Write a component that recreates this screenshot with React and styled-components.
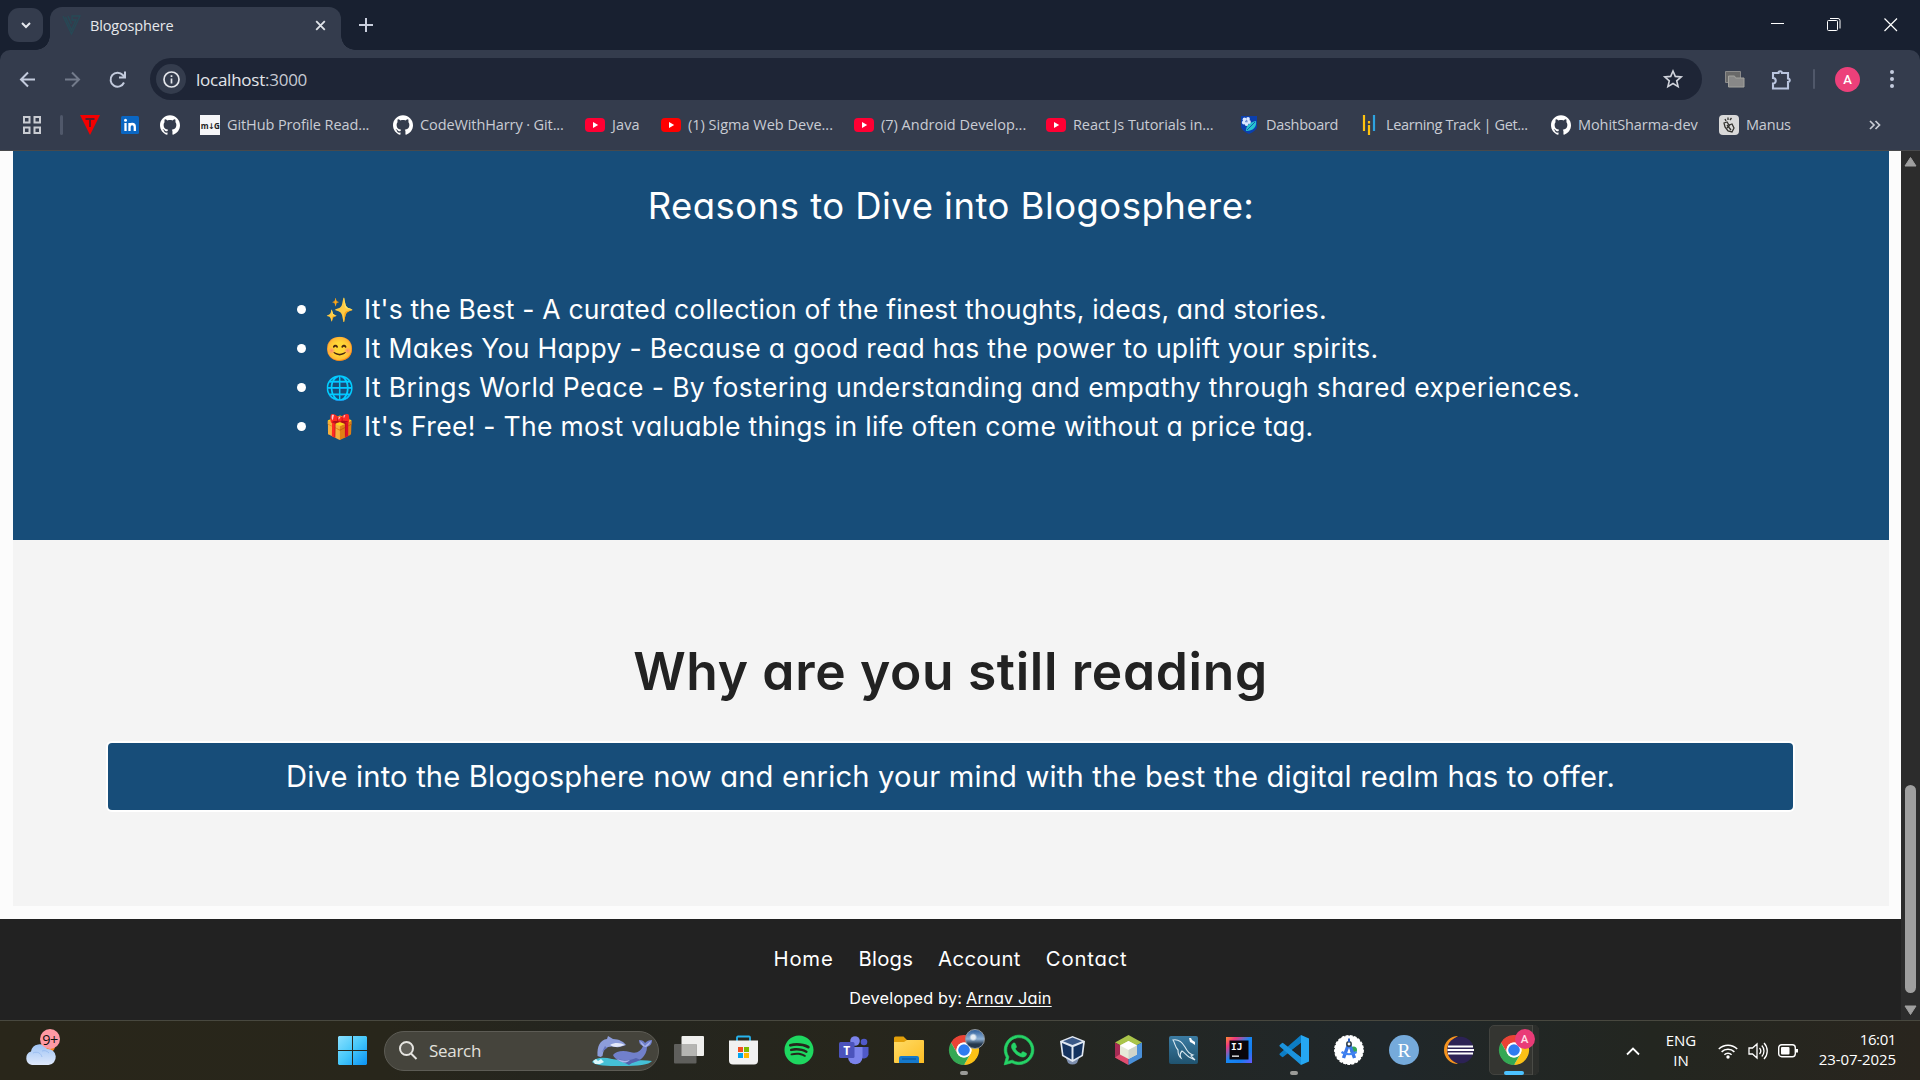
import React from 'react';
import styled, { createGlobalStyle } from 'styled-components';
import { SiGithub } from 'react-icons/si';
import { FaSpotify, FaWhatsapp } from 'react-icons/fa';

const Global = createGlobalStyle`
  * { box-sizing: border-box; }
  html, body { margin: 0; padding: 0; background: #182030; overflow: hidden; }
  svg { display: block; flex: none; overflow: visible; }
  ul { list-style: none; margin: 0; padding: 0; }
`;

const ui = `'Open Sans', 'Noto Sans', sans-serif`;
const body = `Inter, 'Open Sans', 'Noto Color Emoji', sans-serif`;

const Screen = styled.div`
  width: 1920px;
  height: 1080px;
  display: flex;
  flex-direction: column;
  overflow: hidden;
  font-family: ${ui};
`;

const Label = styled.span`
  white-space: nowrap;
  letter-spacing: ${(p) => p.$ls || 0}px;
`;

/* ---------- browser chrome ---------- */
const TabStrip = styled.header`
  height: 50px;
  flex: none;
  display: flex;
  align-items: flex-start;
  padding: 8px 0 0 8px;
  background: #182030;
`;
const TabSearch = styled.button`
  width: 35px;
  height: 34px;
  margin: 0;
  padding: 0;
  border: 0;
  border-radius: 11px;
  background: #343c4d;
  display: grid;
  place-items: center;
`;
const Tab = styled.div`
  position: relative;
  width: 291px;
  height: 43px;
  margin: -1px 0 0 7px;
  padding: 0 13px 7px 12px;
  border-radius: 12px 12px 0 0;
  background: #343c4d;
  display: flex;
  align-items: center;
  color: #e6e8ec;
  font-size: 14.5px;
  &::before, &::after {
    content: '';
    position: absolute;
    bottom: 0;
    width: 14px;
    height: 14px;
  }
  &::before { left: -14px; background: radial-gradient(circle at 0 0, transparent 13.5px, #343c4d 14px); }
  &::after { right: -14px; background: radial-gradient(circle at 100% 0, transparent 13.5px, #343c4d 14px); }
`;
const TabTitle = styled(Label)`
  flex: 1;
  margin-left: 9px;
`;
const NewTab = styled.div`
  margin: 10px 0 0 18px;
`;
const WindowControls = styled.div`
  margin: 10px 22px 0 auto;
  display: flex;
  gap: 43px;
`;

const Toolbar = styled.div`
  height: 58px;
  flex: none;
  display: flex;
  align-items: center;
  padding: 0 22px 0 18px;
  background: #343c4d;
  border-radius: 10px 10px 0 0;
`;
const NavButtons = styled.nav`
  width: 132px;
  flex: none;
  display: flex;
  gap: 26px;
`;
const Omnibox = styled.div`
  width: 1552px;
  height: 42px;
  border-radius: 21px;
  background: #1e2536;
  display: flex;
  align-items: center;
  padding: 0 19px 0 6px;
  color: #e3e5ea;
  font-size: 17px;
`;
const SiteInfo = styled.div`
  width: 30px;
  height: 30px;
  border-radius: 50%;
  background: #343c4d;
  display: grid;
  place-items: center;
`;
const Url = styled(Label)`
  flex: 1;
  margin: 0 0 0 10px;
`;
const Port = styled.span`
  color: #c6cad3;
`;
const ToolbarEnd = styled.div`
  flex: 1;
  display: grid;
  grid-template-columns: 46px 42px 22px 51px 12px;
  align-items: center;
  padding-left: 23px;
`;
const Divider = styled.i`
  width: ${(p) => p.$w}px;
  height: 20px;
  border-radius: 2px;
  background: #50586a;
`;
const Avatar = styled.div`
  width: 25px;
  height: 25px;
  border-radius: 50%;
  background: #ec407a;
  color: #fff;
  font: 500 13px Roboto, sans-serif;
  display: grid;
  place-items: center;
`;

const BookmarkBar = styled.div`
  height: 43px;
  flex: none;
  display: flex;
  align-items: flex-start;
  padding: 0 0 0 23px;
  background: #343c4d;
  border-bottom: 1px solid #48494b;
`;
const BookmarkLead = styled.div`
  height: 34px;
  width: 57px;
  display: flex;
  align-items: center;
  gap: 19px;
`;
const Bookmark = styled.a`
  width: ${(p) => p.$w}px;
  height: 34px;
  flex: none;
  display: flex;
  align-items: center;
  gap: 7px;
  color: #c9ccd4;
  font-size: 14.5px;
`;
const BookmarkLabel = styled(Label)`
  margin-top: -2px;
`;
const Icon20 = styled.span`
  width: 20px;
  height: 20px;
  flex: none;
  display: grid;
  place-items: center;
  color: #fff;
`;
const MdBadge = styled(Icon20)`
  background: #f5f6f8;
  color: #222;
  font: 700 8px 'Open Sans', 'DejaVu Sans', sans-serif;
  letter-spacing: -0.7px;
`;

/* ---------- web page ---------- */
const Viewport = styled.div`
  height: 869px;
  flex: none;
  display: flex;
  background: #fcfcfc;
`;
const Page = styled.main`
  width: 1901px;
  display: flex;
  flex-direction: column;
  font-family: ${body};
  font-feature-settings: 'cv11' 1;
`;
const Reasons = styled.section`
  height: 389px;
  margin: 0 12px 0 13px;
  background: #174d79;
  color: #fff;
  display: flex;
  flex-direction: column;
  align-items: center;
  padding-top: 32px;
`;
const ReasonsTitle = styled.h3`
  margin: 0;
  font-size: 36.5px;
  font-weight: 400;
  line-height: 46px;
  letter-spacing: 0.46px;
  white-space: nowrap;
`;
const ReasonList = styled.ul`
  width: 1308px;
  margin-top: 61px;
`;
const ReasonItem = styled.li`
  height: 39px;
  display: flex;
  align-items: center;
  font-size: 26.5px;
  white-space: nowrap;
`;
const ReasonText = styled(Label)`
  margin-top: -2px;
`;
const Bullet = styled.i`
  width: 9px;
  height: 9px;
  margin-right: 19px;
  border-radius: 50%;
  background: #fff;
`;
const Emoji = styled.span`
  width: 39px;
  font-size: 23.5px;
  line-height: 39px;
  filter: ${(p) => p.$tone};
`;
const Closing = styled.section`
  height: 366px;
  margin: 0 12px 0 13px;
  background: #f4f4f4;
  display: flex;
  flex-direction: column;
  align-items: center;
  padding: 98px 96px 0 95px;
`;
const ClosingTitle = styled.h1`
  margin: 0;
  color: #222;
  font-size: 51.5px;
  font-weight: 600;
  line-height: 66px;
  letter-spacing: 0.68px;
  white-space: nowrap;
`;
const CallToAction = styled.div`
  width: 1685px;
  height: 67px;
  margin-top: 39px;
  border-radius: 4px;
  background: #174d79;
  box-shadow: 0 0 0 2px #fff;
  color: #fff;
  font-size: 29.2px;
  display: grid;
  place-items: center;
`;
const Footer = styled.footer`
  height: 101px;
  margin-top: 13px;
  background: #222;
  color: #fff;
  display: flex;
  flex-direction: column;
  align-items: center;
`;
const FooterLinks = styled.nav`
  height: 30px;
  margin-top: 24px;
  display: flex;
  align-items: center;
  gap: 25px;
  font-size: 20.3px;
`;
const Credit = styled.p`
  height: 24px;
  margin: 13px 0 0;
  display: flex;
  align-items: center;
  gap: 4px;
  font-size: 16.3px;
`;
const CreditLink = styled(Label)`
  text-decoration: underline;
  text-underline-offset: 2px;
`;
const Scrollbar = styled.aside`
  width: 19px;
  background: #2c2c2c;
  display: flex;
  flex-direction: column;
  align-items: center;
  padding: 6px 0 5px;
`;
const Thumb = styled.i`
  width: 11px;
  height: 208px;
  margin: 618px 0 12px;
  border-radius: 6px;
  background: #9f9f9f;
`;

/* ---------- taskbar ---------- */
const Taskbar = styled.footer`
  height: 60px;
  flex: none;
  display: flex;
  align-items: center;
  border-top: 1px solid #48483f;
  background: linear-gradient(90deg, #29261a 0%, #28261b 20%, #24251f 30%, #27261c 45%, #20272a 72%, #232620 86%, #29251e 100%);
  color: #fff;
`;
const Weather = styled.div`
  position: relative;
  width: 338px;
  height: 59px;
  padding: 20px 0 0 25px;
`;
const WeatherBadge = styled.div`
  position: absolute;
  left: 40px;
  top: 8px;
  width: 20px;
  height: 20px;
  border-radius: 50%;
  background: #ff99a4;
  color: #111;
  font-size: 14.5px;
  letter-spacing: -0.5px;
  display: grid;
  place-items: center;
`;
const SearchBox = styled.div`
  width: 275px;
  height: 40px;
  margin: 0 2px 0 17px;
  padding: 0 6px 0 14px;
  border: 1px solid #5d5c55;
  border-radius: 20px;
  background: #45443c;
  display: flex;
  align-items: center;
  color: #e2e1dd;
  font-size: 17px;
`;
const SearchLabel = styled(Label)`
  flex: 1;
  margin: 0 0 0 12px;
`;
const App55 = styled.div`
  position: relative;
  width: 55px;
  height: 59px;
  padding-bottom: 1px;
  display: grid;
  place-items: center;
  &::after {
    content: '';
    position: absolute;
    left: 50%;
    bottom: 5px;
    width: ${(p) => (p.$active ? 20 : p.$running ? 8 : 0)}px;
    height: 4px;
    border-radius: 2px;
    transform: translateX(-50%);
    background: ${(p) => (p.$active ? '#4cc2ff' : '#9b9b98')};
  }
`;
const ActiveTile = styled.div`
  position: absolute;
  left: 3px;
  top: 4px;
  width: 50px;
  height: 50px;
  border: 1px solid #42433f;
  border-radius: 5px;
  background: #343531;
  &::after {
    content: '';
    position: absolute;
    right: -1px;
    top: -1px;
    width: 6px;
    height: 50px;
    border-left: 1px solid #4a4b46;
    border-radius: 0 5px 5px 0;
    background: #2c2e2b;
  }
`;
const Layer = styled.div`
  position: relative;
`;
const ProfileBadge = styled.div`
  position: absolute;
  left: 16px;
  top: -6px;
  width: 20px;
  height: 20px;
  border-radius: 50%;
  background: ${(p) => p.$bg};
  border: ${(p) => (p.$ring ? '1px solid #8f979f' : '0')};
  color: #ffe1ea;
  font: 500 11.5px Roboto, sans-serif;
  display: grid;
  place-items: center;
`;
const Tray = styled.div`
  margin-left: auto;
  padding-right: 24px;
  display: flex;
  align-items: center;
  font-size: 15px;
  line-height: 20px;
`;
const Language = styled.div`
  width: 40px;
  margin: -2px 17px 0 21px;
  display: flex;
  flex-direction: column;
  align-items: center;
`;
const Status = styled.div`
  display: flex;
  align-items: center;
  gap: 10px;
`;
const Clock = styled.div`
  width: 98px;
  margin-top: -4px;
  display: flex;
  flex-direction: column;
  align-items: flex-end;
`;

/* ---------- drawings ---------- */
const Stroke = ({ w = 19, h = w, c = '#c3c9d9', sw = 2, d, vb = `0 0 ${w} ${h}`, cap = 'butt' }) => (
  <svg width={w} height={h} viewBox={vb} fill="none" stroke={c} strokeWidth={sw} strokeLinecap={cap}>
    <path d={d} />
  </svg>
);

const YouTube = ({ color = '#ff0033' }) => (
  <svg width="20" height="14" viewBox="0 0 20 14">
    <rect width="20" height="14" rx="4" fill={color} />
    <path d="M8 4l5.200 3L8 10z" fill="#fff" />
  </svg>
);

const Chrome = () => (
  <svg width="30" height="30" viewBox="0 0 48 48">
    <circle cx="24" cy="24" r="23" fill="#fff" />
    <path d="M24 12h20.8A24 24 0 0 0 3.2 12l10.4 18A12 12 0 0 1 24 12z" fill="#ea4335" />
    <path d="M34.4 30L24 48A24 24 0 0 0 44.8 12H24a12 12 0 0 1 10.4 18z" fill="#fbc116" />
    <path d="M13.6 30L3.2 12A24 24 0 0 0 24 48l10.4-18a12 12 0 0 1-20.8 0z" fill="#34a853" />
    <circle cx="24" cy="24" r="12" fill="#fff" />
    <circle cx="24" cy="24" r="9.3" fill="#2f7cf0" />
  </svg>
);

const WindowsLogo = () => (
  <svg width="29" height="29" viewBox="0 0 29 29">
    <defs>
      <linearGradient id="win" x1="0" y1="0" x2="29" y2="29" gradientUnits="userSpaceOnUse">
        <stop stopColor="#8be1ff" /><stop offset=".5" stopColor="#45c7fa" /><stop offset="1" stopColor="#0a92f5" />
      </linearGradient>
    </defs>
    <path fill="url(#win)" d="M1 0h13v14H0V1zM15 0h13l1 1v13H15zM0 15h14v14H1l-1-1zM15 15h14v13l-1 1H15z" />
  </svg>
);

const Cloud = () => (
  <svg width="31" height="24" viewBox="0 0 31 24">
    <defs>
      <linearGradient id="cl" x1="0" y1="0" x2="0" y2="1">
        <stop stopColor="#9fc4f5" /><stop offset="1" stopColor="#dfe9fb" />
      </linearGradient>
    </defs>
    <circle cx="23" cy="5" r="7" fill="#f7821b" />
    <path d="M7 24a7 7 0 0 1-1-13.500 A8.500 8.500 0 0 1 22 8a8 8 0 0 1 1.500 16z" fill="url(#cl)" />
    <path d="M8 12c4-2 8 0 9 4M17 10c3-1 5 0 7 2" fill="none" stroke="#8fb5ec" strokeWidth="1" opacity=".7" />
  </svg>
);

const Dolphins = () => (
  <svg width="60" height="30" viewBox="0 0 60 30">
    <path d="M0 26c4-5 12-5 20-3s28 0 40 2c-3 4-14 5-30 5S4 30 0 26z" fill="#45c0d6" />
    <path d="M1 25l3-2 2 2 3-2 3 3-4 2H3z" fill="#d9f7fb" />
    <path d="M5.500 20C5 10 8 4 15 3l1-3 5 3c6 0 11 3 13 6-4 1-7 3-10 2-4-1-8-1-11 2-2 2-2 5-2.500 7l-2 1z" fill="#8d9ddb" />
    <path d="M18 9c5-3 11-2 15 0-4 1-6 2-9 2-2 0-4-1-6-2z" fill="#e3e8fa" />
    <path d="M13 10l-3 6 5-4z" fill="#6473bd" />
    <path d="M21 19c3-4 10-5 17-3 7 2 11-1 13-6-3-1-4-3-4-6 3 0 5 1 6 3 2-2 4-3 7-3 0 4-2 6-5 7 0 9-8 16-18 16-7 0-14-3-16-8z" fill="#7180cb" />
    <path d="M23 22c7 3 14 3 21 0l5 2-9 3-3 2z" fill="#5363ae" />
    <path d="M48 5c2 1 3 3 5 5 2-2 4-4 6-5-1 3-3 5-5 6-3 0-5-3-6-6z" fill="#a9b5ea" />
    <path d="M25 23c5 2 9 2 13 1-4 4-9 3-13-1z" fill="#aab8ec" />
  </svg>
);

const TaskView = () => (
  <svg width="30" height="28" viewBox="0 0 30 28">
    <rect x="7.500" y="0" width="22.500" height="20" rx="1" fill="#efefed" />
    <rect x="0" y="8" width="22.500" height="19.500" rx="1" fill="#5f5f5c" />
    <rect x="7.500" y="8" width="15" height="12" fill="#b5b5b2" />
  </svg>
);

const Store = () => (
  <svg width="29" height="29" viewBox="0 0 29 29">
    <path d="M8 6V1.500a1 1 0 0 1 1-1h11a1 1 0 0 1 1 1V6" fill="none" stroke="#27b4ee" strokeWidth="1.800" />
    <path d="M0 4.500h29v20a4 4 0 0 1-4 4H4a4 4 0 0 1-4-4z" fill="#f1f1f1" />
    <path d="M9 11h5v5H9z" fill="#f25022" /><path d="M15 11h5v5h-5z" fill="#7fba00" />
    <path d="M9 17h5v5H9z" fill="#00a4ef" /><path d="M15 17h5v5h-5z" fill="#ffb900" />
  </svg>
);

const Teams = () => (
  <svg width="30" height="28" viewBox="0 0 30 28">
    <circle cx="16" cy="5" r="4.800" fill="#7b83eb" /><circle cx="25" cy="6" r="3.300" fill="#5059c9" />
    <path d="M20 11h9.500v7.500a5 5 0 0 1-9.500 1z" fill="#5059c9" />
    <path d="M9 11h14.500v10a7 7 0 0 1-14.500 0z" fill="#7b83eb" />
    <rect x="0" y="6" width="15.500" height="16" rx="1.500" fill="#4b53bc" />
    <text x="7.700" y="18.500" textAnchor="middle" fill="#fff" fontFamily="Open Sans" fontWeight="700" fontSize="12">T</text>
  </svg>
);

const Folder = () => (
  <svg width="30" height="28" viewBox="0 0 30 28">
    <defs><linearGradient id="fo" x1="0" y1="0" x2="1" y2="1"><stop stopColor="#ffdb66" /><stop offset="1" stopColor="#fdbd23" /></linearGradient></defs>
    <path d="M0 2a1.500 1.500 0 0 1 1.500-1.500h8L13 4h16v6H0z" fill="#e3a009" />
    <path d="M0 6h10l3-2h16a1 1 0 0 1 1 1v22H1a1 1 0 0 1-1-1z" fill="url(#fo)" />
    <path d="M5 27v-5a2 2 0 0 1 2-2h16a2 2 0 0 1 2 2v5z" fill="#1579cc" />
    <path d="M8 23h14" stroke="#0b559c" strokeWidth="1.200" />
  </svg>
);

const VirtualBox = () => (
  <svg width="27" height="29" viewBox="0 0 27 29">
    <path d="M6 22h13l-2 5q-4.500 3-9 0z" fill="#7e8fae" />
    <path d="M12.500 0L25 5l-2 15-10.500 6L2 20 0 5z" fill="#e1e8f2" />
    <path d="M12.500 1.500L22 5.300 12.500 9 3 5.300z" fill="#3b5987" />
    <path d="M2 7l9.500 4v12.500L3.500 19zM23 7l-9.500 4v12.500l8-4.500z" fill="#15335f" />
  </svg>
);

const NetBeans = () => (
  <svg width="27" height="30" viewBox="0 0 27 30">
    <path d="M13.500 0L27 7.500l-13.500 7L0 7.500z" fill="#a9c44a" />
    <path d="M0 7.500l13.500 7V30L0 22.500z" fill="#a52b54" /><path d="M0 22.500l6-4 7.500 5V30z" fill="#df4d6e" />
    <path d="M27 7.500l-13.500 7V30L27 22.500z" fill="#4a90d9" />
    <path d="M13.500 6l8.500 4.500v9L13.500 24 5 19.500v-9z" fill="#e6ead9" />
    <path d="M13.500 6l8.500 4.500-8.500 4.500L5 10.500z" fill="#fff" /><path d="M13.500 15v9L22 19.500v-9z" fill="#cfd5cb" />
  </svg>
);

const MySql = () => (
  <svg width="29" height="28" viewBox="0 0 29 28">
    <defs><linearGradient id="my" x1="0" y1="0" x2="0" y2="1"><stop stopColor="#3b7ba2" /><stop offset="1" stopColor="#20536f" /></linearGradient></defs>
    <rect width="29" height="28" rx="2" fill="url(#my)" />
    <path d="M4 4c5-1 9 2 12 7 2 4 4 7 8 8l-2 1 4 4-6-3c-3-2-5-5-7-6-2 2-2 5-1 7-3-2-3-5-3-8C6 11 6 7 4 4z" fill="none" stroke="#dceaf2" strokeWidth="1.100" />
    <path d="M20 2l2 0 1 2 3 2 0 3-3-2-2-1z" fill="#fff" />
  </svg>
);

const IntelliJ = () => (
  <svg width="26" height="26" viewBox="0 0 26 26">
    <defs><linearGradient id="ij" x1="0" y1="0" x2="1" y2="1"><stop stopColor="#ff8a33" /><stop offset=".2" stopColor="#f0387d" /><stop offset=".48" stopColor="#1688f4" /><stop offset=".75" stopColor="#177cf0" /><stop offset="1" stopColor="#6b57ff" /></linearGradient></defs>
    <path d="M0 0h26v26H0z" fill="url(#ij)" />
    <path d="M3.500 3.500h19v19h-19z" fill="#09060c" />
    <text x="5" y="12.500" fill="#fff" fontFamily="DejaVu Sans Mono" fontWeight="700" fontSize="9.500">IJ</text>
    <path d="M6 18.500h7v1.300H6z" fill="#fff" />
  </svg>
);

const VsCode = () => (
  <svg width="30" height="30" viewBox="0 0 30 30">
    <path d="M22 0l8 3.500v23L22 30z" fill="#25a7f2" />
    <path d="M22 0L.8 18.500a1 1 0 0 0 0 1.500l2 1.800a1.200 1.200 0 0 0 1.600 0L22 8z" fill="#0c7dc5" />
    <path d="M22 30L.8 11.500a1 1 0 0 1 0-1.500l2-1.800a1.200 1.200 0 0 1 1.600 0L22 22z" fill="#1b93dd" />
    <path d="M22 8v14l-9-7z" fill="#20272a" />
  </svg>
);

const AndroidStudio = () => (
  <svg width="30" height="30" viewBox="0 0 30 30">
    <circle cx="15" cy="15" r="14.200" fill="#fff" stroke="#fff" strokeWidth="1.500" strokeDasharray="3 1.200" />
    <circle cx="19.500" cy="15" r="3.500" fill="#34a853" />
    <path d="M15 8L9.500 23M15 8l5.500 15" stroke="#3b78e7" strokeWidth="3.400" />
    <path d="M7.500 17c4 3 11 3 15 0" stroke="#4285f4" strokeWidth="2.200" fill="none" />
    <circle cx="15" cy="9" r="2.200" fill="#fff" stroke="#2b3a44" strokeWidth="1.500" />
    <path d="M15 3.500v3.500" stroke="#2b5fc4" strokeWidth="2" />
  </svg>
);

const RLogo = () => (
  <svg width="30" height="30" viewBox="0 0 30 30">
    <circle cx="15" cy="15" r="15" fill="#75aadb" />
    <text x="15" y="21.500" textAnchor="middle" fill="#fff" fontFamily="Liberation Serif" fontSize="19.500">R</text>
  </svg>
);

const Eclipse = () => (
  <svg width="30" height="28" viewBox="0 0 30 28">
    <path d="M14 0A14 14 0 0 0 14 28 16 16 0 0 1 14 0z" fill="#f7941e" />
    <circle cx="16.500" cy="14" r="13.300" fill="#2c2255" />
    <path d="M4 10.500h25M3.500 14h26.500M4 17.500h25" stroke="#fff" strokeWidth="2" />
  </svg>
);

const bookmarks = [
  { w: 40, icon: (
    <Icon20><svg width="20" height="20" viewBox="0 0 20 20"><path d="M0 0h20l-10 20z" fill="#f40000" /><path d="M5.500 4h9M10 4v8" stroke="#5a1f2b" strokeWidth="2" /></svg></Icon20>) },
  { w: 40, icon: (
    <Icon20><svg width="18" height="18" viewBox="0 0 18 18"><rect width="18" height="18" rx="1.500" fill="#0a66c2" /><circle cx="4.500" cy="4.300" r="1.500" fill="#fff" /><path d="M4.500 7v8M8.500 7v8M8.500 11c0-4 5.300-4 5.300 0v4" fill="none" stroke="#fff" strokeWidth="2.300" /></svg></Icon20>) },
  { w: 40, icon: <Icon20><SiGithub size={20} /></Icon20> },
  { w: 193, icon: <MdBadge>m↓G</MdBadge>, text: 'GitHub Profile Read...', ls: -0.1 },
  { w: 192, icon: <Icon20><SiGithub size={20} /></Icon20>, text: 'CodeWithHarry · Git...', ls: -0.1 },
  { w: 76, icon: <Icon20><YouTube /></Icon20>, text: 'Java', ls: 0.1 },
  { w: 193, icon: <Icon20><YouTube color="#ff0000" /></Icon20>, text: '(1) Sigma Web Deve...', ls: 0 },
  { w: 192, icon: <Icon20><YouTube /></Icon20>, text: '(7) Android Develop...', ls: 0 },
  { w: 193, icon: <Icon20><YouTube /></Icon20>, text: 'React Js Tutorials in...', ls: -0.08 },
  { w: 120, icon: (
    <Icon20><svg width="16" height="18" viewBox="0 0 16 18"><path d="M0 0h16v11q-1 4-8 7-7-3-8-7z" fill="#0b3fae" /><path d="M5 15c0-6 4-9 10-10 1 6-3 10-10 10z" fill="#27c5cf" /><path d="M6 14l8-8" stroke="#0b3fae" strokeWidth=".8" /><g fill="#dbe8ff"><circle cx="3.500" cy="3.500" r="1.900" /><circle cx="7" cy="3" r="1.900" /><circle cx="8" cy="6" r="1.900" /><circle cx="5.500" cy="8" r="1.900" /><circle cx="2.800" cy="6.500" r="1.900" /></g><circle cx="5.400" cy="5.300" r="1" fill="#7895d8" /></svg></Icon20>), text: 'Dashboard', ls: -0.3 },
  { w: 192, icon: (
    <Icon20><svg width="12" height="20" viewBox="0 0 12 20"><path d="M1 0v16" stroke="#ffc20e" strokeWidth="2.200" /><path d="M11 0v16" stroke="#2ea3e0" strokeWidth="2.200" /><path d="M6 10v10M6 6v2.500" stroke="#ffc20e" strokeWidth="2.200" /></svg></Icon20>), text: 'Learning Track | Get...', ls: -0.37 },
  { w: 168, icon: <Icon20><SiGithub size={20} /></Icon20>, text: 'MohitSharma-dev', ls: -0.07 },
  { w: 150, icon: (
    <Icon20><svg width="20" height="20" viewBox="0 0 20 20"><rect width="20" height="20" rx="4" fill="#d9d9d9" /><path d="M5 8l3-1 2 3 3-1 2 4-2 4-4-1-3-4zM8 10l4 5M11 10l-3 3M6 4l1 2M9 2.500V5M12.500 3L11 5" fill="none" stroke="#33332f" strokeWidth="1.300" /></svg></Icon20>), text: 'Manus', ls: -0.2 },
];

const reasons = [
  { emoji: '✨', tone: 'hue-rotate(-14deg)', ls: 0.185, text: "It's the Best - A curated collection of the finest thoughts, ideas, and stories." },
  { emoji: '😊', tone: 'hue-rotate(-8deg)', ls: 0.3, text: 'It Makes You Happy - Because a good read has the power to uplift your spirits.' },
  { emoji: '🌐', tone: 'brightness(1.15)', ls: 0.405, text: 'It Brings World Peace - By fostering understanding and empathy through shared experiences.' },
  { emoji: '🎁', tone: 'none', ls: 0.31, text: "It's Free! - The most valuable things in life often come without a price tag." },
];

const footerLinks = [
  { text: 'Home', ls: 0.8 },
  { text: 'Blogs', ls: 0.2 },
  { text: 'Account', ls: 0.4 },
  { text: 'Contact', ls: 0.8 },
];

const taskApps = [
  { icon: <TaskView /> },
  { icon: <Store /> },
  { icon: <FaSpotify size={30} color="#1ed760" /> },
  { icon: <Teams /> },
  { icon: <Folder /> },
  { running: true, icon: (
    <Layer><Chrome /><ProfileBadge $ring $bg="radial-gradient(circle at 40% 40%, #e6edf3 0 2px, transparent 4px), linear-gradient(#2f5f9b, #8fb2d6 50%, #25384d 78%)" /></Layer>) },
  { icon: <FaWhatsapp size={34} color="#25d366" stroke="#25d366" strokeWidth={10} /> },
  { icon: <VirtualBox /> },
  { icon: <NetBeans /> },
  { icon: <MySql /> },
  { icon: <IntelliJ /> },
  { running: true, icon: <VsCode /> },
  { icon: <AndroidStudio /> },
  { icon: <RLogo /> },
  { icon: <Eclipse /> },
];

export default function App() {
  return (
    <Screen>
      <Global />
      <TabStrip>
        <TabSearch><Stroke w={10} h={6} c="#e6e8ee" d="M1 1l4 4 4-4" /></TabSearch>
        <Tab>
          <svg width="19" height="20" viewBox="0 0 19 20" fill="none" stroke="#264a56" strokeWidth="1.300">
            <path d="M1 1l8.500 18L18 1h-8v4h4L9.500 15 3.500 2M6 1l3.500 8" />
          </svg>
          <TabTitle $ls={-0.15}>Blogosphere</TabTitle>
          <Stroke w={15} h={15} vb="-2 -2 14 14" c="#e1e4ea" sw={1.7} d="M1 1l8 8M9 1l-8 8" />
        </Tab>
        <NewTab><Stroke w={14} c="#c9cfdd" d="M7 0v14M0 7h14" /></NewTab>
        <WindowControls>
          <Stroke w={14} c="#fff" sw={1} d="M1 5.500h13" />
          <svg width="14" height="14" viewBox="0 0 14 14" fill="none" stroke="#fff">
            <rect x=".5" y="2.500" width="10" height="10" rx="1" />
            <path d="M3 .5h8a2 2 0 0 1 2 2v8" />
          </svg>
          <Stroke w={14} c="#fff" sw={1.2} d="M.5.500l12.500 12.500M13 .5L.5 13" />
        </WindowControls>
      </TabStrip>

      <Toolbar>
        <NavButtons>
          <Stroke w={19} c="#c3cbdd" d="M17 9.500H3M10 2.500L3 9.500 10 16.500" />
          <Stroke w={19} c="#737b8b" d="M2 9.500h14M9 2.500l7 7L9 16.500" />
          <Stroke w={19} c="#c3cbdd" d="M16 12.500A7 7 0 1 1 14.800 5L17 7.200M17 1.500v6h-6" />
        </NavButtons>
        <Omnibox>
          <SiteInfo>
            <svg width="17" height="17" viewBox="0 0 17 17" fill="none" stroke="#e3e5ea" strokeWidth="1.700">
              <circle cx="8.500" cy="8.500" r="7.500" /><path d="M8.500 7.500v5M8.500 4.300v1.700" />
            </svg>
          </SiteInfo>
          <Url $ls={-0.25}>localhost<Port>:3000</Port></Url>
          <Stroke w={20} c="#d1d4dc" sw={1.6} d="M10 2l2.300 5.400 5.900.5-4.500 3.900 1.400 5.800L10 14.500l-5.100 3.100 1.400-5.800L1.800 7.900l5.900-.5z" />
        </Omnibox>
        <ToolbarEnd>
          <svg width="20" height="17" viewBox="0 0 20 17">
            <path d="M.5.5h15v11H.5z" fill="#696969" stroke="#8b8b8b" />
            <path d="M3.500 5h6l1 2h8.500v9H3.500z" fill="#888" stroke="#a3a39e" />
          </svg>
          <Stroke w={21} c="#b9c5df" sw={2.1} d="M2 4h5.500a1.600 1.600 0 1 1 3.500 0H17v5.500a1.500 1.500 0 1 1 0 3.500v6.500H2v-5a2.500 2.500 0 0 0 0-5.500z" />
          <Divider $w={2} />
          <Avatar>A</Avatar>
          <svg width="12" height="20" viewBox="0 0 12 20" fill="#c3cbdd">
            <circle cx="6" cy="3" r="2" /><circle cx="6" cy="10" r="2" /><circle cx="6" cy="17" r="2" />
          </svg>
        </ToolbarEnd>
      </Toolbar>

      <BookmarkBar>
        <BookmarkLead>
          <Stroke w={18} c="#c9ccd2" d="M1 1h5.500v5.500H1zM11.500 1H17v5.500h-5.500zM1 11.500h5.500V17H1zM11.500 11.500H17V17h-5.500z" />
          <Divider $w={3} />
        </BookmarkLead>
        {bookmarks.map((b, i) => (
          <Bookmark key={i} $w={b.w}>
            {b.icon}
            {b.text && <BookmarkLabel $ls={b.ls}>{b.text}</BookmarkLabel>}
          </Bookmark>
        ))}
        <Bookmark $w={20}><Stroke w={12} h={10} c="#c9ccd4" sw={1.7} d="M1 1l4 4-4 4M6.500 1l4 4-4 4" /></Bookmark>
      </BookmarkBar>

      <Viewport>
        <Page>
          <Reasons>
            <ReasonsTitle>Reasons to Dive into Blogosphere:</ReasonsTitle>
            <ReasonList>
              {reasons.map((r) => (
                <ReasonItem key={r.emoji}>
                  <Bullet />
                  <Emoji $tone={r.tone}>{r.emoji}</Emoji>
                  <ReasonText $ls={r.ls}>{r.text}</ReasonText>
                </ReasonItem>
              ))}
            </ReasonList>
          </Reasons>
          <Closing>
            <ClosingTitle>Why are you still reading</ClosingTitle>
            <CallToAction>
              <Label $ls={0.165}>Dive into the Blogosphere now and enrich your mind with the best the digital realm has to offer.</Label>
            </CallToAction>
          </Closing>
          <Footer>
            <FooterLinks>
              {footerLinks.map((l) => <Label key={l.text} $ls={l.ls}>{l.text}</Label>)}
            </FooterLinks>
            <Credit>
              <Label $ls={0.18}>Developed by:</Label>
              <CreditLink $ls={0.18}>Arnav Jain</CreditLink>
            </Credit>
          </Footer>
        </Page>
        <Scrollbar>
          <svg width="13" height="10" viewBox="0 0 13 10"><path d="M6.500.5L12 9H1z" fill="#9f9f9f" stroke="#9f9f9f" strokeLinejoin="round" /></svg>
          <Thumb />
          <svg width="13" height="10" viewBox="0 0 13 10"><path d="M6.500 9.500L12 1H1z" fill="#9f9f9f" stroke="#9f9f9f" strokeLinejoin="round" /></svg>
        </Scrollbar>
      </Viewport>

      <Taskbar>
        <Weather><Cloud /><WeatherBadge>9+</WeatherBadge></Weather>
        <WindowsLogo />
        <SearchBox>
          <svg width="18" height="19" viewBox="0 0 18 19" fill="none" stroke="#e6e5e1" strokeWidth="2">
            <circle cx="7.500" cy="7.500" r="6.500" fill="#5f5e57" /><path d="M12 12.500l5.500 5.500" />
          </svg>
          <SearchLabel $ls={-0.3}>Search</SearchLabel>
          <Dolphins />
        </SearchBox>
        {taskApps.map((a, i) => <App55 key={i} $running={a.running}>{a.icon}</App55>)}
        <App55 $active>
          <ActiveTile />
          <Layer><Chrome /><ProfileBadge $bg="#e93b77">A</ProfileBadge></Layer>
        </App55>
        <Tray>
          <Stroke w={14} h={8} c="#fff" sw={1.8} d="M1 7.500l6-6 6 6" />
          <Language><Label>ENG</Label><Label>IN</Label></Language>
          <Status>
            <svg width="20" height="16" viewBox="0 0 20 16" fill="none" stroke="#fff" strokeWidth="1.500">
              <path d="M.8 6a13 13 0 0 1 18.400 0M3.600 8.900a9 9 0 0 1 12.800 0M6.400 11.700a5 5 0 0 1 7.200 0" />
              <circle cx="10" cy="14" r="1.700" fill="#fff" stroke="none" />
            </svg>
            <svg width="20" height="18" viewBox="0 0 20 18" fill="none" stroke="#fff" strokeWidth="1.300">
              <path d="M1 6h3.500L9 2v14l-4.500-4H1zM11.500 6a4.500 4.500 0 0 1 0 6M13.800 3.500a8 8 0 0 1 0 11M16 1a11.500 11.500 0 0 1 0 16" />
            </svg>
            <svg width="20" height="14" viewBox="0 0 20 14" fill="none" stroke="#fff" strokeWidth="1.400">
              <rect x=".7" y=".7" width="16.600" height="12" rx="3" />
              <rect x="3" y="3" width="8.500" height="7.500" rx="1" fill="#fff" stroke="none" />
              <path d="M19 5v3.500" strokeWidth="2" />
            </svg>
          </Status>
          <Clock><Label $ls={-0.4}>16:01</Label><Label $ls={-0.1}>23-07-2025</Label></Clock>
        </Tray>
      </Taskbar>
    </Screen>
  );
}
